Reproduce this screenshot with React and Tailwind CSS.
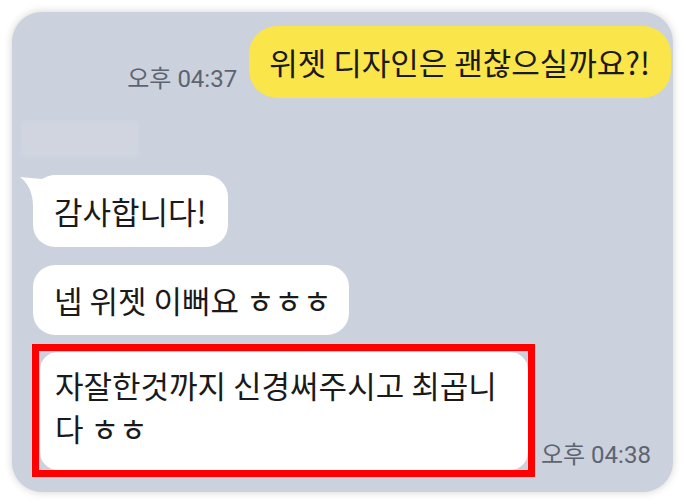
export default function App() {
  return (
    <div className="h-[504px] w-[686px] bg-white p-3 font-['Noto_Sans_CJK_KR',sans-serif]">
      <div className="relative h-[480px] w-[661px] overflow-hidden rounded-[30px] bg-[#cbd1dd] shadow-[0_0_8px_rgba(0,0,0,0.18)]">
        {/* my message */}
        <div className="flex items-end justify-end gap-3 pr-[2px] pt-[14px]">
          <span className="mb-[7px] font-['Roboto','Noto_Sans_CJK_KR',sans-serif] text-[24px] leading-none text-[#5d6470]">
            오후 04:37
          </span>
          <div className="flex h-[72px] items-center rounded-[28px] bg-[#fae54b] pl-[20px] pr-[21px] text-[31px] text-[#1a1a1a]">
            위젯 디자인은 괜찮으실까요?!
          </div>
        </div>

        {/* blurred profile name */}
        <div className="ml-2 mt-[22px] h-[38px] w-[120px] bg-white/10 blur-[2px]" />

        {/* their messages */}
        <div className="ml-[21px] mt-[17px] flex flex-col items-start gap-[18px]">
          <div className="relative rounded-[22px] bg-white px-[21px] py-[14px] text-[31px] leading-[44px] text-[#1a1a1a]">
            <svg
              className="absolute -left-[13px] top-0"
              width="34"
              height="32"
              viewBox="0 0 34 32"
            >
              <path d="M0 2 Q10 3 22 4 L34 0 L34 32 L13 32 Q13 12 0 2 Z" fill="#ffffff" />
            </svg>
            <span className="relative">감사합니다!</span>
          </div>
          <div className="rounded-[22px] bg-white pl-[21px] pr-[17px] py-[13px] text-[31px] leading-[44px] text-[#1a1a1a]">
            넵 위젯 이뻐요 ㅎㅎㅎ
          </div>
        </div>

        <div className="ml-[20px] mt-[9px] flex items-end">
          <div className="border-[7px] border-[#ff0000] pl-[1px] pt-[1px]">
            <div className="w-[488px] rounded-[18px] bg-white pb-[21px] pl-[15px] pt-[11px] text-[31px] leading-[43px] text-[#1a1a1a]">
              자잘한것까지 신경써주시고 최곱니
              <br />다 ㅎㅎ
            </div>
          </div>
          <span className="mb-[10px] ml-[6px] font-['Roboto','Noto_Sans_CJK_KR',sans-serif] text-[24px] leading-none text-[#5d6470]">
            오후 04:38
          </span>
        </div>
      </div>
    </div>
  );
}
